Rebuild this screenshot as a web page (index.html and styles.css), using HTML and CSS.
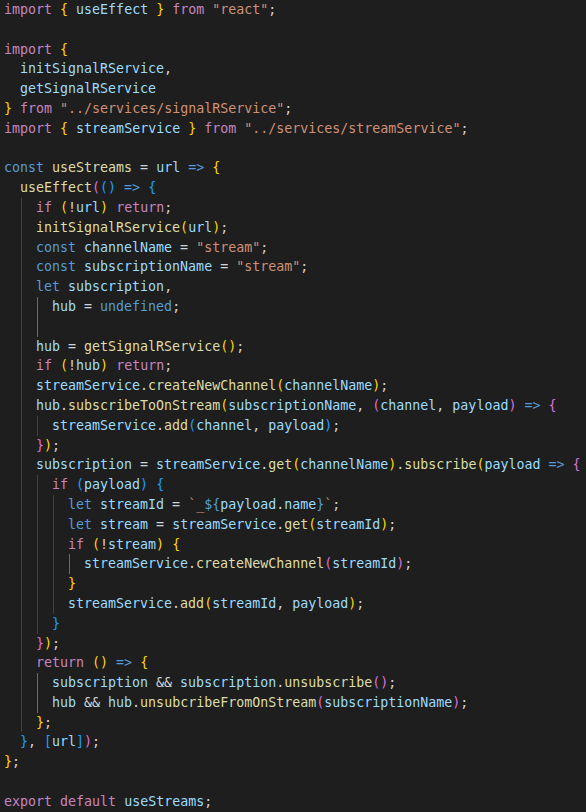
FILE: index.html
```html
<!DOCTYPE html>
<html>
<head>
<meta charset="utf-8">
<link rel="stylesheet" href="styles.css">
</head>
<body>
<div class="code">
<div class="ln"><span class="k">import</span> <span class="b1">{</span> <span class="v">useEffect</span> <span class="b1">}</span> <span class="k">from</span> <span class="str">"react"</span>;</div>
<div class="ln"></div>
<div class="ln"><span class="k">import</span> <span class="b1">{</span></div>
<div class="ln"><span class="t"></span><span class="v">initSignalRService</span>,</div>
<div class="ln"><span class="t"></span><span class="v">getSignalRService</span></div>
<div class="ln"><span class="b1">}</span> <span class="k">from</span> <span class="str">"../services/signalRService"</span>;</div>
<div class="ln"><span class="k">import</span> <span class="b1">{</span> <span class="v">streamService</span> <span class="b1">}</span> <span class="k">from</span> <span class="str">"../services/streamService"</span>;</div>
<div class="ln"></div>
<div class="ln"><span class="s">const</span> <span class="f">useStreams</span> = <span class="v">url</span> <span class="s">=&gt;</span> <span class="b1">{</span></div>
<div class="ln"><span class="t"></span><span class="f">useEffect</span><span class="b2">(</span><span class="b3">()</span> <span class="s">=&gt;</span> <span class="b3">{</span></div>
<div class="ln"><span class="t"></span><span class="t g"></span><span class="k">if</span> <span class="b1">(</span>!<span class="v">url</span><span class="b1">)</span> <span class="k">return</span>;</div>
<div class="ln"><span class="t"></span><span class="t g"></span><span class="f">initSignalRService</span><span class="b1">(</span><span class="v">url</span><span class="b1">)</span>;</div>
<div class="ln"><span class="t"></span><span class="t g"></span><span class="s">const</span> <span class="v">channelName</span> = <span class="str">"stream"</span>;</div>
<div class="ln"><span class="t"></span><span class="t g"></span><span class="s">const</span> <span class="v">subscriptionName</span> = <span class="str">"stream"</span>;</div>
<div class="ln"><span class="t"></span><span class="t g"></span><span class="s">let</span> <span class="v">subscription</span>,</div>
<div class="ln"><span class="t"></span><span class="t g"></span><span class="t g hi"></span><span class="v">hub</span> = <span class="s">undefined</span>;</div>
<div class="ln"><span class="t"></span><span class="t g"></span><span class="t g hi"></span></div>
<div class="ln"><span class="t"></span><span class="t g"></span><span class="v">hub</span> = <span class="f">getSignalRService</span><span class="b1">()</span>;</div>
<div class="ln"><span class="t"></span><span class="t g"></span><span class="k">if</span> <span class="b1">(</span>!<span class="v">hub</span><span class="b1">)</span> <span class="k">return</span>;</div>
<div class="ln"><span class="t"></span><span class="t g"></span><span class="v">streamService</span>.<span class="f">createNewChannel</span><span class="b1">(</span><span class="v">channelName</span><span class="b1">)</span>;</div>
<div class="ln"><span class="t"></span><span class="t g"></span><span class="v">hub</span>.<span class="f">subscribeToOnStream</span><span class="b1">(</span><span class="v">subscriptionName</span>, <span class="b2">(</span><span class="v">channel</span>, <span class="v">payload</span><span class="b2">)</span> <span class="s">=&gt;</span> <span class="b2">{</span></div>
<div class="ln"><span class="t"></span><span class="t g"></span><span class="t g"></span><span class="v">streamService</span>.<span class="f">add</span><span class="b3">(</span><span class="v">channel</span>, <span class="v">payload</span><span class="b3">)</span>;</div>
<div class="ln"><span class="t"></span><span class="t g"></span><span class="b2">}</span><span class="b1">)</span>;</div>
<div class="ln"><span class="t"></span><span class="t g"></span><span class="v">subscription</span> = <span class="v">streamService</span>.<span class="f">get</span><span class="b1">(</span><span class="v">channelName</span><span class="b1">)</span>.<span class="f">subscribe</span><span class="b1">(</span><span class="v">payload</span> <span class="s">=&gt;</span> <span class="b2">{</span></div>
<div class="ln"><span class="t"></span><span class="t g"></span><span class="t g"></span><span class="k">if</span> <span class="b3">(</span><span class="v">payload</span><span class="b3">)</span> <span class="b3">{</span></div>
<div class="ln"><span class="t"></span><span class="t g"></span><span class="t g"></span><span class="t g"></span><span class="s">let</span> <span class="v">streamId</span> = <span class="str">`_</span><span class="s">${</span><span class="v">payload</span>.<span class="v">name</span><span class="s">}</span><span class="str">`</span>;</div>
<div class="ln"><span class="t"></span><span class="t g"></span><span class="t g"></span><span class="t g"></span><span class="s">let</span> <span class="v">stream</span> = <span class="v">streamService</span>.<span class="f">get</span><span class="b1">(</span><span class="v">streamId</span><span class="b1">)</span>;</div>
<div class="ln"><span class="t"></span><span class="t g"></span><span class="t g"></span><span class="t g"></span><span class="k">if</span> <span class="b1">(</span>!<span class="v">stream</span><span class="b1">)</span> <span class="b1">{</span></div>
<div class="ln"><span class="t"></span><span class="t g"></span><span class="t g"></span><span class="t g"></span><span class="t g hi"></span><span class="v">streamService</span>.<span class="f">createNewChannel</span><span class="b2">(</span><span class="v">streamId</span><span class="b2">)</span>;</div>
<div class="ln"><span class="t"></span><span class="t g"></span><span class="t g"></span><span class="t g"></span><span class="b1">}</span></div>
<div class="ln"><span class="t"></span><span class="t g"></span><span class="t g"></span><span class="t g"></span><span class="v">streamService</span>.<span class="f">add</span><span class="b1">(</span><span class="v">streamId</span>, <span class="v">payload</span><span class="b1">)</span>;</div>
<div class="ln"><span class="t"></span><span class="t g"></span><span class="t g"></span><span class="b3">}</span></div>
<div class="ln"><span class="t"></span><span class="t g"></span><span class="b2">}</span><span class="b1">)</span>;</div>
<div class="ln"><span class="t"></span><span class="t g"></span><span class="k">return</span> <span class="b1">()</span> <span class="s">=&gt;</span> <span class="b1">{</span></div>
<div class="ln"><span class="t"></span><span class="t g"></span><span class="t g hi"></span><span class="v">subscription</span> &amp;&amp; <span class="v">subscription</span>.<span class="f">unsubscribe</span><span class="b2">()</span>;</div>
<div class="ln"><span class="t"></span><span class="t g"></span><span class="t g hi"></span><span class="v">hub</span> &amp;&amp; <span class="v">hub</span>.<span class="f">unsubcribeFromOnStream</span><span class="b2">(</span><span class="v">subscriptionName</span><span class="b2">)</span>;</div>
<div class="ln"><span class="t"></span><span class="t g"></span><span class="b1">}</span>;</div>
<div class="ln"><span class="t"></span><span class="b3">}</span>, <span class="b3">[</span><span class="v">url</span><span class="b3">]</span><span class="b2">)</span>;</div>
<div class="ln"><span class="b1">}</span>;</div>
<div class="ln"></div>
<div class="ln"><span class="k">export</span> <span class="k">default</span> <span class="v">useStreams</span>;</div>
</div>
</body>
</html>
```
FILE: styles.css
```css
html, body {
  margin: 0;
  padding: 0;
  background: #1e1e1e;
}

.code {
  padding: 0 0 0 4px;
  font-family: "DejaVu Sans Mono", "Liberation Mono", monospace;
  font-size: 13.3px;
  color: #d4d4d4;
}

.ln {
  height: 19.8px;
  line-height: 19.8px;
  white-space: pre;
  overflow: hidden;
}

.t {
  display: inline-block;
  width: 16px;
  height: 19.8px;
  vertical-align: top;
}

.g {
  background: linear-gradient(#404040, #404040) 1px 0 / 1px 100% no-repeat;
}

.g.hi {
  background: linear-gradient(#6a6a6a, #6a6a6a) 1px 0 / 1px 100% no-repeat;
}

.k { color: #c586c0; }
.s { color: #569cd6; }
.f { color: #dcdcaa; }
.v { color: #9cdcfe; }
.str { color: #ce9178; }
.b1 { color: #ffd700; }
.b2 { color: #da70d6; }
.b3 { color: #179fff; }
```
